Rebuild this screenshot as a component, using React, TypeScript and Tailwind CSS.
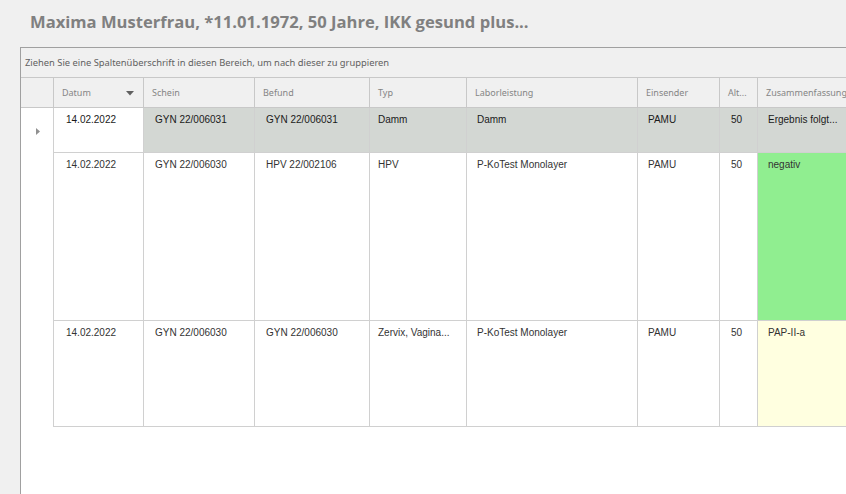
import React from "react";

const cols = [
  { key: "datum", w: "w-[90px]", label: "Datum", pl: "pl-[12px]" },
  { key: "schein", w: "w-[111px]", label: "Schein", pl: "pl-[11px]" },
  { key: "befund", w: "w-[115px]", label: "Befund", pl: "pl-[11px]" },
  { key: "typ", w: "w-[97px]", label: "Typ", pl: "pl-[8px]" },
  { key: "labor", w: "w-[171px]", label: "Laborleistung", pl: "pl-[10px]" },
  { key: "einsender", w: "w-[82px]", label: "Einsender", pl: "pl-[10px]" },
  { key: "alt", w: "w-[38px]", label: "Alt...", pl: "pl-[11px]" },
  { key: "zus", w: "w-[200px]", label: "Zusammenfassung", pl: "pl-[10px]" },
];

type Row = {
  h: string;
  cells: string[];
  selected?: boolean;
  zusBg: string;
};

const rows: Row[] = [
  {
    h: "h-[45px]",
    cells: ["14.02.2022", "GYN 22/006031", "GYN 22/006031", "Damm", "Damm", "PAMU", "50", "Ergebnis folgt..."],
    selected: true,
    zusBg: "bg-[#d3d7d3]",
  },
  {
    h: "h-[168px]",
    cells: ["14.02.2022", "GYN 22/006030", "HPV 22/002106", "HPV", "P-KoTest Monolayer", "PAMU", "50", "negativ"],
    zusBg: "bg-[#90ee90]",
  },
  {
    h: "h-[106px]",
    cells: ["14.02.2022", "GYN 22/006030", "GYN 22/006030", "Zervix, Vagina...", "P-KoTest Monolayer", "PAMU", "50", "PAP-II-a"],
    zusBg: "bg-[#ffffe0]",
  },
];

export default function App() {
  return (
    <div className="w-[846px] h-[494px] bg-[#f0f0f0] overflow-hidden flex flex-col">
      <div className="h-[47px] shrink-0 pl-[30px] pt-[10px]">
        <div
          className="text-[16.6px] leading-[24px] font-bold text-[#808080] whitespace-nowrap"
          style={{ fontFamily: '"Open Sans", "Noto Sans", sans-serif' }}
        >
          Maxima Musterfrau, *11.01.1972, 50 Jahre, IKK gesund plus...
        </div>
      </div>
      <div className="flex-1 ml-[20px] w-[900px] border-l border-t border-[#a0a0a0] bg-white flex flex-col">
        {/* group panel */}
        <div
          className="h-[30px] shrink-0 bg-[#f0f0f0] border-b border-[#c8c8c8] flex items-center pl-[4px] pt-[1px] text-[9.35px] text-[#606060] whitespace-nowrap"
          style={{ fontFamily: '"Noto Sans", "Open Sans", sans-serif' }}
        >
          Ziehen Sie eine Spaltenüberschrift in diesen Bereich, um nach dieser zu gruppieren
        </div>
        {/* header */}
        <div
          className="h-[30px] shrink-0 bg-[#f0f0f0] border-b border-[#c8c8c8] flex text-[9px] text-[#858585]"
          style={{ fontFamily: '"Noto Sans", "Open Sans", sans-serif' }}
        >
          <div className="w-[33px] shrink-0 border-r border-[#c8c8c8]" />
          {cols.map((c) => (
            <div
              key={c.key}
              className={`${c.w} shrink-0 border-r border-[#c8c8c8] flex items-center pl-[8px] pr-[8px] relative whitespace-nowrap overflow-hidden`}
            >
              <span>{c.label}</span>
              {c.key === "datum" && (
                <svg className="absolute right-[9px] top-[13px]" width="8" height="5" viewBox="0 0 8 5">
                  <polygon points="0,0 8,0 4,4.5" fill="#606060" />
                </svg>
              )}
            </div>
          ))}
        </div>
        {/* body */}
        <div
          className="flex flex-col text-[10px]"
          style={{ fontFamily: '"Liberation Sans", Arial, sans-serif' }}
        >
          {rows.map((r, i) => (
            <div key={i} className={`${r.h} shrink-0 flex`}>
              <div className="w-[33px] shrink-0 border-r border-[#d0d0d0] bg-white relative">
                {r.selected && (
                  <svg className="absolute left-[15px] top-[20px]" width="4" height="7" viewBox="0 0 4 7">
                    <polygon points="0,0 4,3.5 0,7" fill="#909090" />
                  </svg>
                )}
              </div>
              <div className="flex border-b border-[#d0d0d0]">
                {cols.map((c, ci) => {
                  let bg = "bg-white";
                  if (c.key === "zus") bg = r.zusBg;
                  else if (r.selected && c.key !== "datum") bg = "bg-[#d3d7d3]";
                  const color = r.selected ? "text-[#1a1a1a]" : "text-[#333333]";
                  return (
                    <div
                      key={c.key}
                      className={`${c.w} shrink-0 border-r border-[#d0d0d0] ${bg} ${color} ${c.pl} pt-[5px] leading-[13px] whitespace-nowrap overflow-hidden`}
                    >
                      {r.cells[ci]}
                    </div>
                  );
                })}
              </div>
            </div>
          ))}
        </div>
      </div>
    </div>
  );
}
